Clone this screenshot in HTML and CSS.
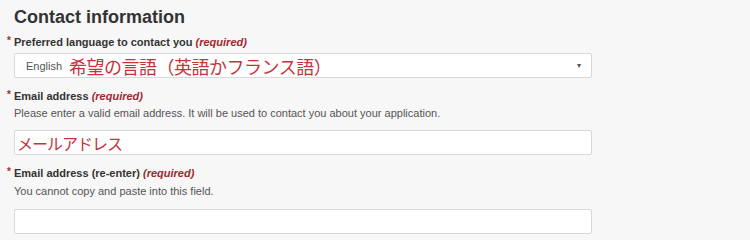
FILE: index.html
```html
<!DOCTYPE html>
<html lang="en">
<head>
    <meta charset="UTF-8">
    <title>Contact information</title>
    <link rel="stylesheet" href="styles.css">
</head>
<body>
    <section class="contact">
        <h2 class="section-title">Contact information</h2>

        <div class="field">
            <label class="field-label"><span class="req-mark">*</span>Preferred language to contact you <em class="req">(required)</em></label>
            <div class="select-box">
                <span class="select-value">English</span>
                <span class="note note-lang">希望の言語（英語かフランス語）</span>
                <span class="select-arrow">&#9662;</span>
            </div>
        </div>

        <div class="field">
            <label class="field-label"><span class="req-mark">*</span>Email address <em class="req">(required)</em></label>
            <p class="help">Please enter a valid email address. It will be used to contact you about your application.</p>
            <div class="text-box">
                <span class="note note-mail">メールアドレス</span>
            </div>
        </div>

        <div class="field">
            <label class="field-label"><span class="req-mark">*</span>Email address (re-enter) <em class="req">(required)</em></label>
            <p class="help help-last">You cannot copy and paste into this field.</p>
            <div class="text-box"></div>
        </div>
    </section>
</body>
</html>
```

FILE: styles.css
```css
body {
    margin: 0;
    background: #f7f7f7;
    font-family: 'Liberation Sans', Arial, sans-serif;
    color: #333;
}
.contact {
    padding: 6px 158px 0 14px;
}
.section-title {
    margin: 0 0 7px;
    font-size: 18px;
    font-weight: bold;
    color: #333;
    line-height: 22px;
}
.field {
    margin-bottom: 11px;
}
.field-label {
    display: block;
    position: relative;
    font-size: 11px;
    font-weight: bold;
    line-height: 14px;
    color: #333;
    margin-bottom: 4px;
}
.req-mark {
    position: absolute;
    left: -7px;
    top: -1px;
    color: #b1262c;
    font-size: 10px;
}
.req {
    color: #a4262c;
    font-style: italic;
}
.help {
    margin: -1px 0 10px;
    font-size: 11px;
    line-height: 14px;
    color: #555;
}
.help-last {
    margin-top: 0;
    margin-bottom: 11px;
}
.select-box,
.text-box {
    box-sizing: border-box;
    height: 25px;
    background: #fff;
    border: 1px solid #d8d8d8;
    border-radius: 2px;
    display: flex;
    align-items: center;
}
.select-box {
    padding: 0 10px 0 11px;
}
.select-value {
    font-size: 11px;
    color: #555;
    margin-right: 7px;
}
.select-arrow {
    margin-left: auto;
    font-size: 8px;
    color: #555;
}
.note {
    font-family: 'Noto Sans CJK JP', sans-serif;
    color: #c5333c;
    line-height: 1;
}
.note-lang {
    font-size: 18px;
    letter-spacing: -0.5px;
}
.note-mail {
    font-size: 16px;
    letter-spacing: -1px;
    padding-left: 2px;
}
```
